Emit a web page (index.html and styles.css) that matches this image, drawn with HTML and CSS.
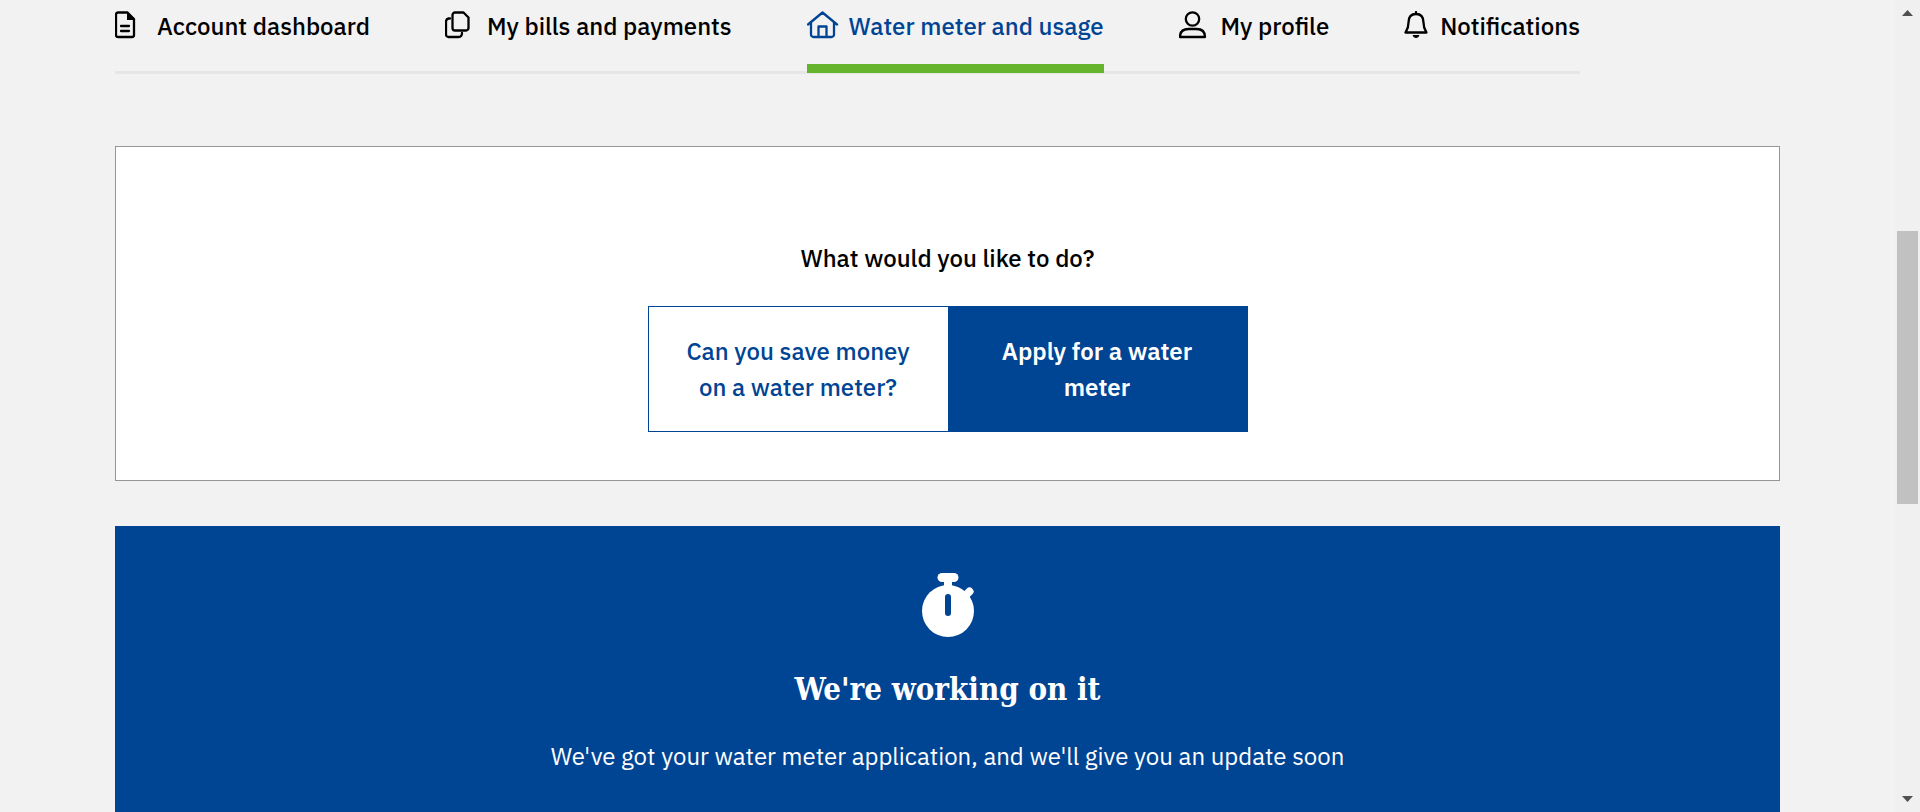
FILE: index.html
```
<!DOCTYPE html>
<html lang="en">
<head>
<meta charset="utf-8">
<meta name="viewport" content="width=device-width, initial-scale=1">
<title>Water meter and usage</title>
<link rel="stylesheet" href="styles.css">
</head>
<body>
<div class="page">
  <nav class="tabs" aria-label="Account">
    <a class="tab" href="#dashboard">
      <svg class="tab-icon" width="42" height="30" viewBox="0 0 42 30" aria-hidden="true">
        <path stroke-width="2.300" d="M12.500 1.500H3a2 2 0 0 0-2 2V24a2 2 0 0 0 2 2h14a2 2 0 0 0 2-2V8z"/>
        <path class="solid" d="M12 1l8 8h-8z"/>
        <path d="M6 15h8M6 20h8"/>
      </svg>
      <span>Account dashboard</span>
    </a>
    <a class="tab" href="#bills">
      <svg class="tab-icon" width="42" height="30" viewBox="0 0 42 30" aria-hidden="true">
        <path d="M10 1.500h8.500l5 5V17a2.500 2.500 0 0 1-2.500 2.500H10A2.500 2.500 0 0 1 7.500 17V4A2.500 2.500 0 0 1 10 1.500z"/>
        <path d="M5 7.500H3.500Q1 8 1 10.500V23.500A2.500 2.500 0 0 0 3.500 26H13.500Q17 26 17 22"/>
      </svg>
      <span>My bills and payments</span>
    </a>
    <a class="tab tab-active" href="#meter" aria-current="page">
      <svg class="tab-icon" width="42" height="30" viewBox="0 0 42 30" aria-hidden="true">
        <path d="M1 13.500L15.500 1.500L30 13.500M4 11.500V23.500A2.500 2.500 0 0 0 6.500 26H24.500A2.500 2.500 0 0 0 27 23.500V11.500M11.500 26V15.500H19.500V26"/>
      </svg>
      <span>Water meter and usage</span>
    </a>
    <a class="tab" href="#profile">
      <svg class="tab-icon" width="42" height="30" viewBox="0 0 42 30" aria-hidden="true">
        <circle cx="13.500" cy="8" r="6.700"/>
        <path d="M1 26C1 20.500 4.500 18 9.500 18H17.500C22.500 18 26 20.500 26 26z"/>
      </svg>
      <span>My profile</span>
    </a>
    <a class="tab" href="#notifications">
      <svg class="tab-icon" width="36" height="30" viewBox="0 0 36 30" aria-hidden="true">
        <path d="M12 3C6.500 3 4.500 7 4.500 11.500C4.500 17 3 19 1.500 21.500H22.500C21 19 19.500 17 19.500 11.500C19.500 7 17.500 3 12 3zM12 1V3"/>
        <path class="solid" d="M8.500 24H15.500Q14.500 27 12 27T8.500 24z"/>
      </svg>
      <span>Notifications</span>
    </a>
  </nav>

  <main class="content">
    <section class="choice">
      <h2 class="choice-title" id="choice-title">What would you like to do?</h2>
      <div class="toggle" role="group" aria-labelledby="choice-title">
        <button class="toggle-option" type="button" aria-pressed="false">Can you save money on a water meter?</button>
        <button class="toggle-option toggle-selected" type="button" aria-pressed="true">Apply for a water meter</button>
      </div>
    </section>

    <section class="status">
      <svg class="stopwatch" width="54" height="66" viewBox="0 0 54 66" aria-hidden="true">
        <circle cx="27" cy="39" r="26"/>
        <rect x="16.500" y="1" width="21" height="9" rx="4.500"/>
        <path d="M23 8h8v8h-8z"/>
        <path class="stopwatch-knob" d="M43 25L48.500 19.500"/>
        <rect class="stopwatch-hand" x="24" y="22" width="6" height="22" rx="3"/>
      </svg>
      <h1 class="status-title">We're working on it</h1>
      <p class="status-text">We've got your water meter application, and we'll give you an update soon</p>
    </section>
  </main>
</div>

<div class="scrollbar" aria-hidden="true">
  <svg width="11" height="6" viewBox="0 0 11 6"><path d="M5.500 0L11 6H0z"/></svg>
  <div class="scroll-track">
    <div class="scroll-thumb"></div>
  </div>
  <svg width="11" height="6" viewBox="0 0 11 6"><path d="M0 0H11L5.500 6z"/></svg>
</div>
</body>
</html>
```
FILE: styles.css
```
:root {
  --blue: #004494;
  --green: #66b32e;
  --page: #f2f2f2;
}

* {
  box-sizing: border-box;
}

body {
  margin: 0;
  display: flex;
  height: 100vh;
  overflow: hidden;
  background: var(--page);
  color: #000;
  font-family: "IBM Plex Sans", "Noto Sans", sans-serif;
  font-size: 24px;
  font-weight: 500;
  line-height: 36px;
}

.page {
  flex: 1;
  min-width: 0;
  display: flex;
  flex-direction: column;
  padding: 0 115px;
}

/* Tabs */
.tabs {
  display: flex;
  justify-content: space-between;
  margin-right: 200px;
  padding-top: 8px;
  border-bottom: 3px solid #e6e6e6;
}

.tab {
  display: flex;
  align-items: center;
  padding-bottom: 20px;
  margin-bottom: -2px;
  border-bottom: 9px solid transparent;
  color: inherit;
  text-decoration: none;
  white-space: nowrap;
}

.tab-active {
  color: var(--blue);
  border-bottom-color: var(--green);
}

.tab-icon {
  flex: none;
  fill: none;
  stroke: currentColor;
  stroke-width: 2.3;
  stroke-linejoin: round;
  stroke-linecap: round;
}

.tab-icon .solid {
  fill: currentColor;
  stroke: none;
}

/* Panels */
.content {
  flex: 1;
  display: flex;
  flex-direction: column;
  gap: 45px;
  padding-top: 72px;
}

.choice {
  display: flex;
  flex-direction: column;
  align-items: center;
  gap: 30px;
  padding: 93px 24px 48px;
  background: #fff;
  border: 1px solid #969696;
}

.choice-title {
  margin: 0;
  font-size: 24px;
  font-weight: 500;
}

.toggle {
  display: grid;
  grid-template-columns: 1fr 1fr;
  width: 100%;
  max-width: 600px;
  border: 1px solid var(--blue);
}

.toggle-option {
  padding: 26px 32px;
  border: 0;
  background: #fff;
  color: var(--blue);
  font: inherit;
  cursor: pointer;
}

.toggle-selected {
  background: var(--blue);
  color: #fff;
  font-weight: 600;
}

.status {
  flex: 1;
  display: flex;
  flex-direction: column;
  align-items: center;
  padding: 46px 24px;
  background: var(--blue);
  color: #fff;
  text-align: center;
}

.stopwatch {
  fill: #fff;
}

.stopwatch-knob {
  stroke: #fff;
  stroke-width: 8;
  stroke-linecap: round;
}

.stopwatch-hand {
  fill: var(--blue);
}

.status-title {
  margin: 30px 0 28px;
  font-family: "Roboto Slab", "DejaVu Serif Condensed", "DejaVu Serif", serif;
  font-size: 31px;
  font-weight: 700;
  line-height: 42px;
}

.status-text {
  margin: 0;
  font-weight: 400;
}

/* Scrollbar */
.scrollbar {
  flex: none;
  width: 25px;
  display: flex;
  flex-direction: column;
  align-items: center;
  gap: 9px;
  padding: 10px 0;
  background: #f0f0f0;
  fill: #505050;
}

.scroll-track {
  flex: 1;
  display: grid;
  grid-template-rows: 206fr 273fr 283fr;
}

.scroll-thumb {
  grid-row: 2;
  width: 21px;
  background: #c1c1c1;
}
```
